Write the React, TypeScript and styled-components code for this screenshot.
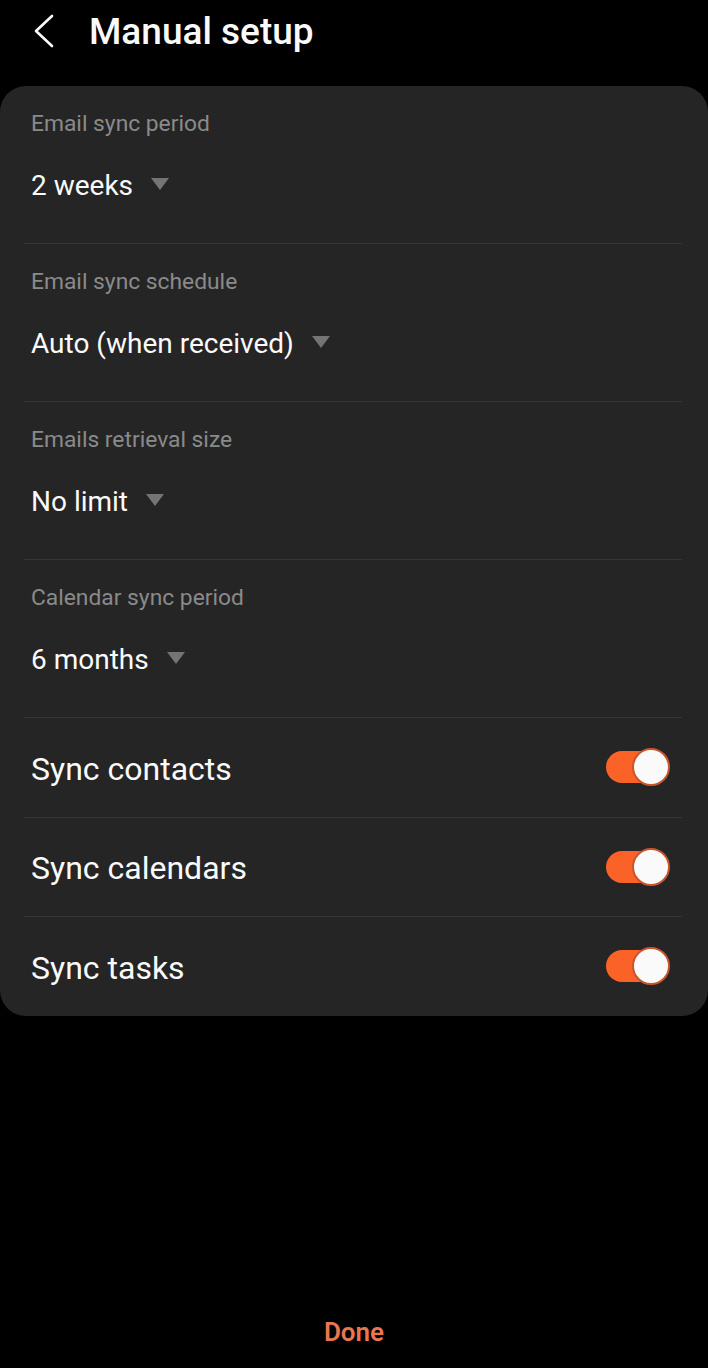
import React, { useState } from "react";
import styled, { createGlobalStyle } from "styled-components";

const GlobalStyle = createGlobalStyle`
  html, body {
    margin: 0;
    padding: 0;
    background: #000;
  }
  body {
    font-family: Roboto, "Noto Sans", "Liberation Sans", sans-serif;
    -webkit-font-smoothing: antialiased;
  }
`;

const Screen = styled.div`
  width: 708px;
  height: 1368px;
  display: flex;
  flex-direction: column;
  background: #000;
  color: #fafafa;
  overflow: hidden;
`;

const Header = styled.header`
  height: 86px;
  display: flex;
  align-items: flex-start;
  padding-top: 12px;
  box-sizing: border-box;
`;

const BackButton = styled.button`
  width: 89px;
  height: 38px;
  border: 0;
  padding: 0 0 0 34px;
  background: none;
  display: flex;
  align-items: center;
  cursor: pointer;
`;

const Title = styled.h1`
  margin: 0;
  font-size: 37px;
  line-height: 40px;
  font-weight: 500;
  color: #fafafa;
`;

const Card = styled.section`
  background: #252525;
  border-radius: 26px;
  padding: 0 26px 0 24px;
`;

const Item = styled.div`
  box-sizing: border-box;

  & + & {
    border-top: 1px solid #353535;
  }
`;

const Picker = styled(Item)`
  height: 158px;
  padding: 24px 7px 0;
  display: flex;
  flex-direction: column;

  &:first-child {
    height: 157px;
  }
`;

const Label = styled.div`
  font-size: 22.8px;
  line-height: 28px;
  color: #8a8a8a;
`;

const ValueRow = styled.div`
  margin-top: 30px;
  display: flex;
  align-items: center;
  gap: 18px;
  font-size: 28px;
  line-height: 36px;
  color: #fafafa;
`;

const Caret = styled.span`
  width: 0;
  height: 0;
  border-left: 9px solid transparent;
  border-right: 9px solid transparent;
  border-top: 12px solid #747474;
  margin-top: -4px;
`;

const SwitchRow = styled(Item)`
  height: 99.5px;
  padding: 3px 12px 0 7px;
  display: flex;
  align-items: center;
  justify-content: space-between;
  font-size: 32px;
  color: #fafafa;
`;

const Track = styled.button<{ $on: boolean }>`
  position: relative;
  width: 64px;
  height: 38px;
  margin-top: -3px;
  border: 0;
  padding: 0;
  background: none;
  cursor: pointer;

  &::before {
    content: "";
    position: absolute;
    left: 0;
    top: 3px;
    width: 60px;
    height: 32px;
    border-radius: 16px;
    background: ${(p) => (p.$on ? "#fb6228" : "#5a5a5a")};
  }
`;

const Thumb = styled.span<{ $on: boolean }>`
  position: absolute;
  top: 0;
  left: ${(p) => (p.$on ? "26px" : "0")};
  width: 38px;
  height: 38px;
  box-sizing: border-box;
  border-radius: 50%;
  background: #fafafa;
  border: 2px solid ${(p) => (p.$on ? "#c9552a" : "#5a5a5a")};
`;

const Footer = styled.div`
  margin-top: auto;
  height: 50px;
  display: flex;
  justify-content: center;
  align-items: flex-start;
`;

const DoneButton = styled.button`
  border: 0;
  background: none;
  padding: 0;
  font-family: inherit;
  font-size: 26px;
  line-height: 28px;
  font-weight: 600;
  color: #e8774f;
  cursor: pointer;
`;

const pickers = [
  { label: "Email sync period", value: "2 weeks" },
  { label: "Email sync schedule", value: "Auto (when received)" },
  { label: "Emails retrieval size", value: "No limit" },
  { label: "Calendar sync period", value: "6 months" },
];

const Switch = ({ on, onToggle }: { on: boolean; onToggle: () => void }) => (
  <Track $on={on} onClick={onToggle} aria-pressed={on}>
    <Thumb $on={on} />
  </Track>
);

export default function App() {
  const [toggles, setToggles] = useState({
    "Sync contacts": true,
    "Sync calendars": true,
    "Sync tasks": true,
  });

  return (
    <Screen>
      <GlobalStyle />
      <Header>
        <BackButton aria-label="Back">
          <svg width="22" height="36" viewBox="0 0 22 36">
            <polyline
              points="18,3 2,18 18,33"
              fill="none"
              stroke="#fafafa"
              strokeWidth="2.6"
              strokeLinecap="round"
              strokeLinejoin="round"
            />
          </svg>
        </BackButton>
        <Title>Manual setup</Title>
      </Header>

      <Card>
        {pickers.map((p) => (
          <Picker key={p.label}>
            <Label>{p.label}</Label>
            <ValueRow>
              {p.value}
              <Caret />
            </ValueRow>
          </Picker>
        ))}
        {Object.entries(toggles).map(([name, on]) => (
          <SwitchRow key={name}>
            {name}
            <Switch
              on={on}
              onToggle={() => setToggles({ ...toggles, [name]: !on })}
            />
          </SwitchRow>
        ))}
      </Card>

      <Footer>
        <DoneButton>Done</DoneButton>
      </Footer>
    </Screen>
  );
}
